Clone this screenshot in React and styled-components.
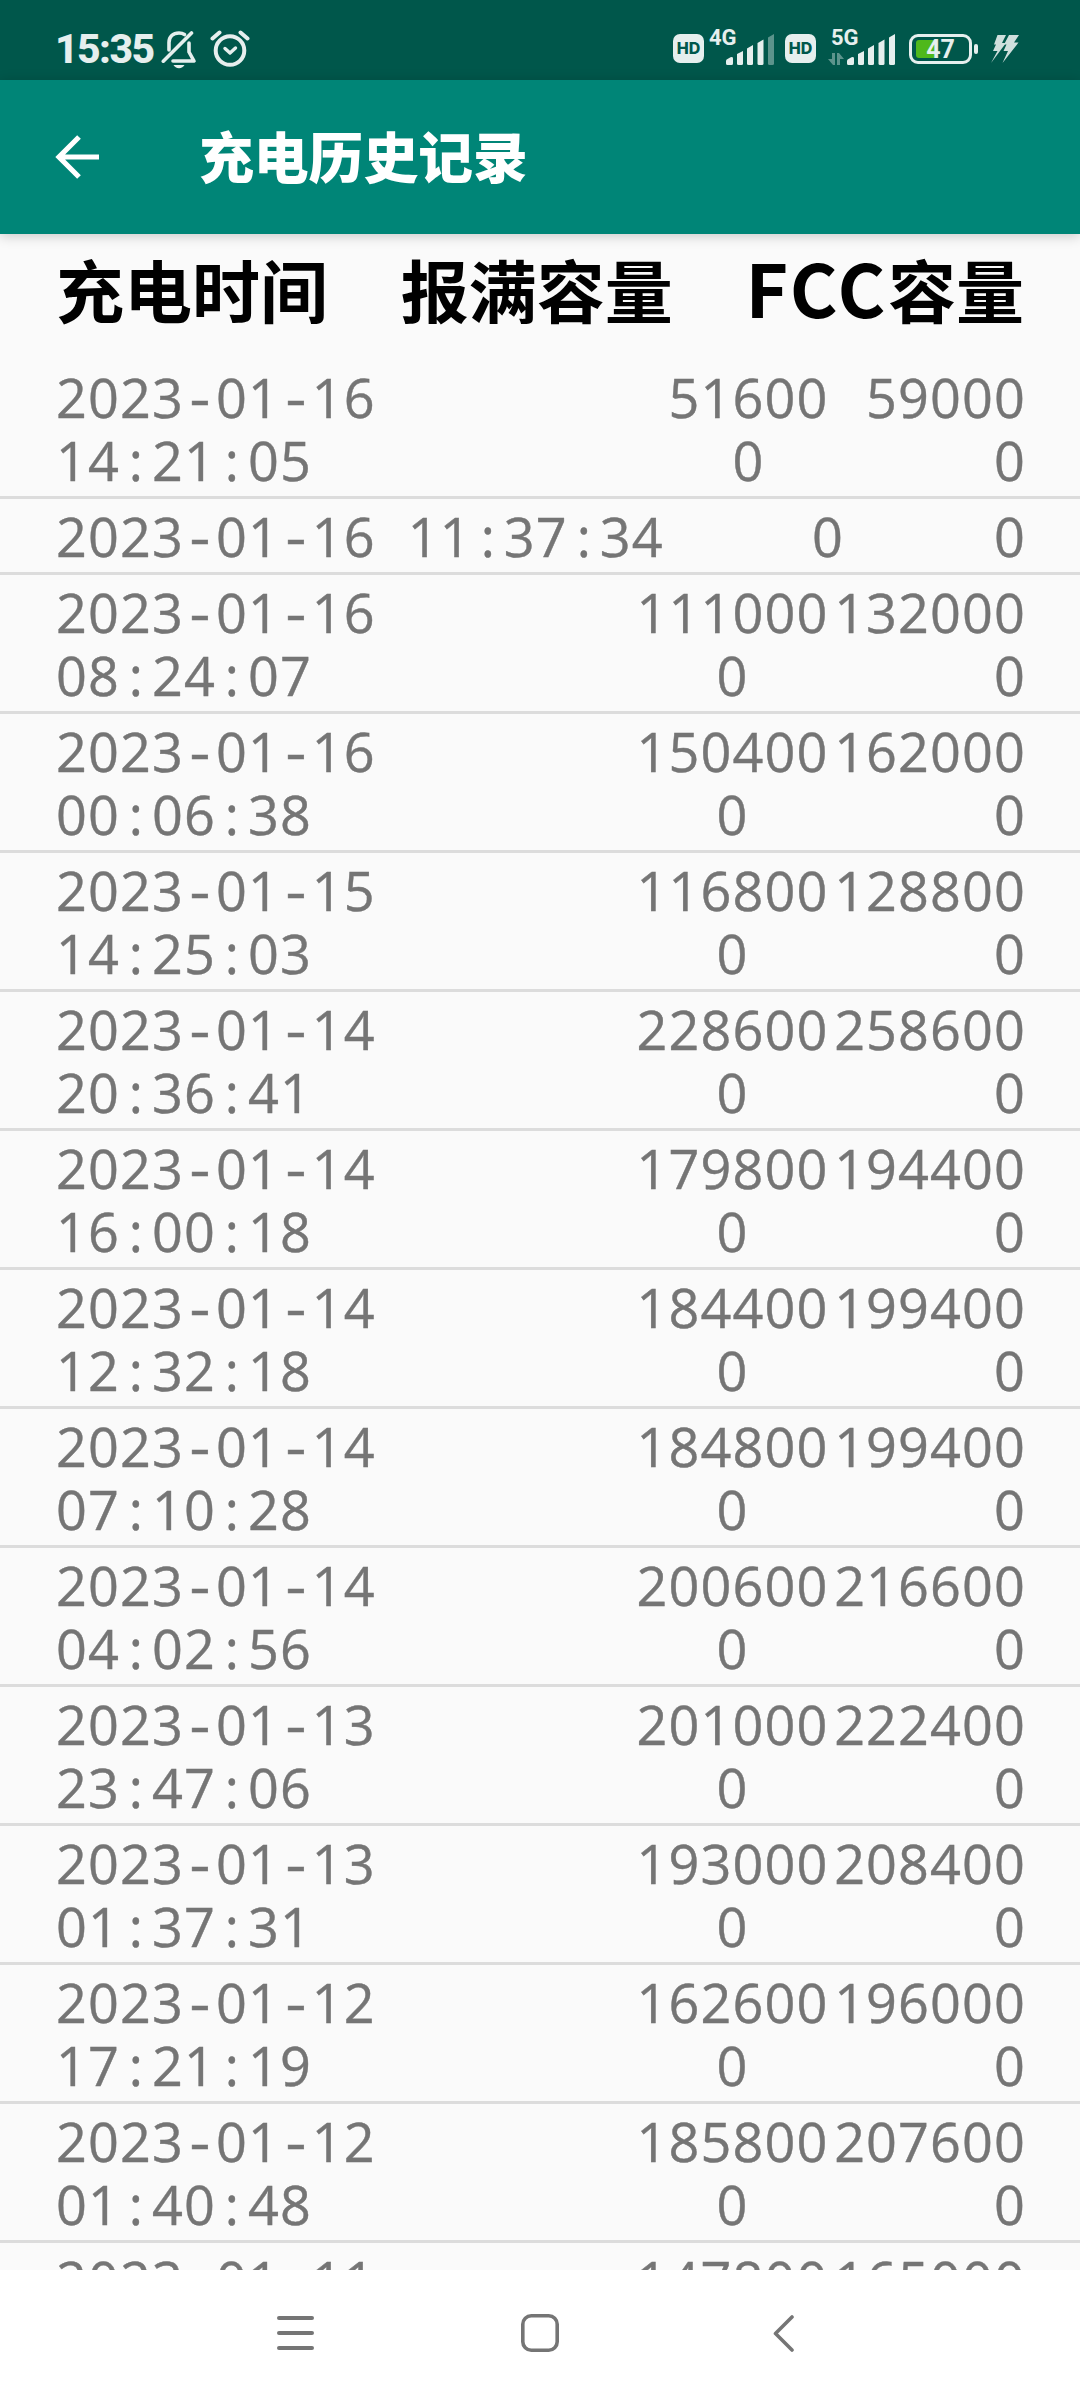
import styled, { createGlobalStyle } from 'styled-components';

const records = [
  ['2023-01-16 14:21:05', '516000', '590000'],
  ['2023-01-16 11:37:34', '0', '0'],
  ['2023-01-16 08:24:07', '1110000', '1320000'],
  ['2023-01-16 00:06:38', '1504000', '1620000'],
  ['2023-01-15 14:25:03', '1168000', '1288000'],
  ['2023-01-14 20:36:41', '2286000', '2586000'],
  ['2023-01-14 16:00:18', '1798000', '1944000'],
  ['2023-01-14 12:32:18', '1844000', '1994000'],
  ['2023-01-14 07:10:28', '1848000', '1994000'],
  ['2023-01-14 04:02:56', '2006000', '2166000'],
  ['2023-01-13 23:47:06', '2010000', '2224000'],
  ['2023-01-13 01:37:31', '1930000', '2084000'],
  ['2023-01-12 17:21:19', '1626000', '1960000'],
  ['2023-01-12 01:40:48', '1858000', '2076000'],
  ['2023-01-11 14:50:22', '1478000', '1650000'],
];

// every character sits in a 32px cell, separators get their own box
const MonoText = ({ text }) =>
  text
    .split(/([-:])/)
    .map((part, i) =>
      i % 2 ? (
        <SeparatorStyled key={i} $wide={part === '-'}>
          {part}
        </SeparatorStyled>
      ) : (
        <span key={i}>{part}</span>
      )
    );

const Signal = ({ dim }) => (
  <svg width="48" height="31" viewBox="0 0 48 31" fill="#e6efee">
    <path d="M0 29.500V27q0-1.500 1.500-2l3-1.700q2.500-.8 2.500 1.200v5q0 1.500-1.500 1.500h-4Q0 31 0 29.500z" />
    <path d="M11 29.500V20l6-3v12.500q0 1.500-1.500 1.500h-3q-1.500 0-1.500-1.500z" />
    <path d="M21 29.500V14.500l6-3.500v18.500q0 1.500-1.500 1.500h-3q-1.500 0-1.500-1.500z" />
    <path d="M31.500 29.500V9l6-3.500v24q0 1.500-1.500 1.500h-3q-1.500 0-1.500-1.500z" />
    <path d="M42 29.500V3.500L48 0v29.500q0 1.500-1.500 1.500h-3q-1.500 0-1.500-1.500z" opacity={dim ? 0.4 : 1} />
  </svg>
);

const Record = ({ record }) => {
  const [time, full, fcc] = record;
  const [date, clock] = time.split(' ');
  const single = full.length === 1;

  return (
    <RecordStyled>
      <TimeStyled $single={single}>
        <DatePartStyled>
          <MonoText text={date} />
        </DatePartStyled>
        <DatePartStyled>
          <MonoText text={clock} />
        </DatePartStyled>
      </TimeStyled>
      <FullStyled $digits={full.length}>{full}</FullStyled>
      <FccStyled $digits={fcc.length}>
        <FccValueStyled $digits={fcc.length}>{fcc}</FccValueStyled>
      </FccStyled>
    </RecordStyled>
  );
};

const App = () => {
  return (
    <ScreenStyled>
      <GlobalStyle />
      <StatusBarStyled>
        <ClockStyled>15:35</ClockStyled>
        <StatusIconStyled $left={8}>
          <svg width="36" height="40" viewBox="0 0 36 40" fill="none" stroke="#e6efee" strokeWidth="3.600" strokeLinecap="round" strokeLinejoin="round">
            <path d="M8 21V13.500C8 7.500 12 4 18 4c2.300 0 4 .5 5.500 1.500" />
            <path d="M28 14v9l5 9H12" />
            <path d="M2.300 32.200 30.500 4" />
            <path d="M12.500 36h11c-1 2-3 3.200-5.500 3.200s-4.500-1.200-5.500-3.200z" fill="#e6efee" stroke="none" />
          </svg>
        </StatusIconStyled>
        <StatusIconStyled $left={13}>
          <svg width="40" height="40" viewBox="0 0 40 40" fill="none" stroke="#e6efee" strokeWidth="4" strokeLinecap="round" strokeLinejoin="round">
            <circle cx="20" cy="21.500" r="14.300" />
            <path d="M2.500 9.500 9.500 3.500M37.500 9.500 30.500 3.500" />
            <path d="m15 19.500 5 4.500 5.500-5" strokeWidth="3.400" />
          </svg>
        </StatusIconStyled>
        <SpacerStyled />
        <HdStyled>HD</HdStyled>
        <NetworkStyled $left={5}>
          <NetworkLabelStyled>4G</NetworkLabelStyled>
          <Signal dim />
        </NetworkStyled>
        <HdStyled $left={11}>HD</HdStyled>
        <NetworkStyled $left={14}>
          <NetworkLabelStyled $left={1}>5G</NetworkLabelStyled>
          <TrafficStyled width="16" height="12" viewBox="0 0 16 12" fill="#e6efee" opacity="0.4">
            <path d="M4 0h3v12H5L0 6h4zM9 0h2l5 6h-4v6H9z" />
          </TrafficStyled>
          <Signal />
        </NetworkStyled>
        <BatteryStyled>
          <BatteryFillStyled />
          <BatteryTextStyled>47</BatteryTextStyled>
        </BatteryStyled>
        <BatteryTipStyled />
        <StatusIconStyled $left={13} $top={35}>
          <svg width="28" height="29" viewBox="0 0 28 29" fill="#cfdfdd">
            <path d="M6.500 0H15l-4 8h4L0 28l6.500-12H2L5 9.500H3z" />
            <path d="M18 0h10l-5 7.500h4.500L11.500 28l5.500-12h-4.500l3-6.500H13z" />
          </svg>
        </StatusIconStyled>
      </StatusBarStyled>
      <ToolbarStyled>
        <svg width="44" height="44" viewBox="0 0 44 44" fill="none" stroke="#fff" strokeWidth="5.200">
          <path d="M24 2 4 22l20 20M3 22h41" />
        </svg>
        <TitleStyled>充电历史记录</TitleStyled>
      </ToolbarStyled>
      <ContentStyled>
        <HeadingStyled>
          <span>充电时间</span>
          <span>报满容量</span>
          <span>
            <LatinStyled>FCC</LatinStyled>容量
          </span>
        </HeadingStyled>
        {records.map((record) => (
          <Record key={record[0]} record={record} />
        ))}
      </ContentStyled>
      <NavBarStyled>
        <svg width="37" height="36" viewBox="0 0 37 36" stroke="#757575" strokeWidth="4" strokeLinecap="round">
          <path d="M2 3h33M2 18h33M2 33h33" />
        </svg>
        <svg width="38" height="38" viewBox="0 0 38 38" fill="none" stroke="#757575" strokeWidth="3.600">
          <rect x="1.800" y="1.800" width="34.400" height="34.400" rx="8.500" />
        </svg>
        <svg width="37" height="37" viewBox="0 0 37 37" fill="none" stroke="#757575" strokeWidth="3.600" strokeLinecap="round" strokeLinejoin="round">
          <path d="M26 2 9.500 18.500 26 35" />
        </svg>
      </NavBarStyled>
    </ScreenStyled>
  );
};

const GlobalStyle = createGlobalStyle`
  * {
    box-sizing: border-box;
  }

  body {
    margin: 0;
    background-color: #fafafa;
  }

  svg {
    display: block;
    flex-shrink: 0;
  }
`;

const ScreenStyled = styled.div`
  display: flex;
  flex-direction: column;
  width: 1080px;
  height: 2400px;
  overflow: hidden;
  background-color: #fafafa;
  font-family: 'Open Sans', 'Noto Sans CJK SC', sans-serif;
`;

const StatusBarStyled = styled.div`
  display: flex;
  align-items: flex-start;
  height: 80px;
  flex-shrink: 0;
  padding: 0 61px 0 55px;
  background-color: #00574b;
  color: #e6efee;
`;

const ClockStyled = styled.div`
  width: 98px;
  padding-top: 25px;
  font: 800 41px/48px Roboto, sans-serif;
  letter-spacing: -1.6px;
  white-space: nowrap;
`;

const StatusIconStyled = styled.div`
  margin-left: ${({ $left }) => $left}px;
  padding-top: ${({ $top = 29 }) => $top}px;
`;

const SpacerStyled = styled.div`
  flex: 1;
`;

const HdStyled = styled.div`
  width: 31px;
  height: 29px;
  margin: 34px 0 0 ${({ $left = 0 }) => $left}px;
  border-radius: 7px;
  background-color: #e6efee;
  color: #00574b;
  font: 800 16px/29px Inter, sans-serif;
  text-align: center;
`;

const NetworkStyled = styled.div`
  position: relative;
  display: flex;
  justify-content: flex-end;
  width: 65px;
  margin-left: ${({ $left }) => $left}px;
  padding-top: 34px;
`;

const NetworkLabelStyled = styled.div`
  position: absolute;
  left: ${({ $left = 0 }) => $left}px;
  top: 26px;
  font: 700 22px/24px Roboto, sans-serif;
`;

const TrafficStyled = styled.svg`
  margin: 19px 3px 0 0;
`;

const BatteryStyled = styled.div`
  position: relative;
  width: 63px;
  height: 30px;
  margin: 34px 0 0 14px;
  padding: 3px 4px;
  border: 3px solid #e6efee;
  border-radius: 9px;
`;

const BatteryFillStyled = styled.div`
  width: 21px;
  height: 18px;
  border-radius: 3px 0 0 3px;
  background-color: #4fb81c;
`;

const BatteryTextStyled = styled.div`
  position: absolute;
  inset: 0;
  font: 700 25px/25px Roboto, sans-serif;
  text-align: center;
`;

const BatteryTipStyled = styled.div`
  width: 4px;
  height: 10px;
  margin: 44px 0 0 2px;
  border-radius: 2px;
  background-color: #e6efee;
`;

const ToolbarStyled = styled.div`
  display: flex;
  align-items: center;
  height: 154px;
  flex-shrink: 0;
  padding: 0 55px;
  background-color: #008577;
  box-shadow: 0 2px 12px rgba(0, 0, 0, 0.2);
  z-index: 1;
`;

const TitleStyled = styled.h1`
  margin: 0 0 6px 100px;
  color: #fff;
  font: 900 54.800px/80px 'Noto Sans CJK SC', sans-serif;
`;

const ContentStyled = styled.div`
  flex: 1;
  min-height: 0;
  overflow: hidden;
`;

const HeadingStyled = styled.div`
  display: flex;
  justify-content: space-between;
  height: 126px;
  padding: 5px 56px 0;
  color: #000;
  font: 700 68px/100px 'Noto Sans CJK SC', sans-serif;
`;

const LatinStyled = styled.span`
  font-size: 73px;
  line-height: 1;
  letter-spacing: 2.6px;
`;

const RecordStyled = styled.div`
  display: flex;
  padding: 6px 54px 4px 56px;
  border-bottom: 3px solid #dcdcdc;
  color: #757575;
  font-size: 54px;
  line-height: 63px;
  letter-spacing: 1.100px;
  -webkit-text-stroke: 0.4px #757575;
`;

const TimeStyled = styled.div`
  display: flex;
  flex-direction: ${({ $single }) => ($single ? 'row' : 'column')};
  column-gap: 32px;
  ${({ $single }) => ($single ? 'width: 608px; flex-shrink: 0;' : 'flex: 1;')}
`;

const DatePartStyled = styled.div`
  white-space: nowrap;
`;

const SeparatorStyled = styled.span`
  display: inline-block;
  width: 32px;
  letter-spacing: 0;
  text-align: center;
  ${({ $wide }) => $wide && 'transform: scaleX(1.2);'}
`;

const FullStyled = styled.div`
  ${({ $digits }) =>
    $digits === 1 ? 'flex: 1;' : `width: ${($digits - 1) * 32 + 1}px;`}
  text-align: center;
  word-break: break-all;
`;

const FccStyled = styled.div`
  display: flex;
  justify-content: flex-end;
  width: ${({ $digits }) => ($digits === 1 ? 34 : 197)}px;
`;

const FccValueStyled = styled.div`
  width: ${({ $digits }) => Math.max($digits - 1, 1) * 32 + 1}px;
  text-align: right;
  word-break: break-all;
`;

const NavBarStyled = styled.div`
  display: flex;
  justify-content: space-between;
  align-items: center;
  height: 130px;
  flex-shrink: 0;
  padding: 0 277px 4px;
  background-color: #fff;
`;

export default App;
